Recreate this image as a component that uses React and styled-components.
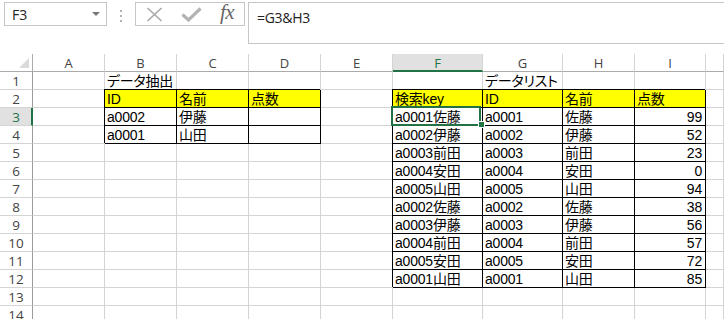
import React from "react";
import styled, { createGlobalStyle } from "styled-components";

const GlobalStyle = createGlobalStyle`
  html, body { margin: 0; padding: 0; background: #fff; }
  body { font-family: "Liberation Sans", "Noto Sans CJK JP", sans-serif; overflow: hidden; }
`;

const Page = styled.div`
  width: 724px;
  height: 319px;
  overflow: hidden;
  background: #fff;
`;

const FormulaBar = styled.div`
  display: flex;
  align-items: flex-start;
  height: 42px;
  padding-top: 2px;
  margin-bottom: 10px;
`;

const NameBox = styled.div`
  box-sizing: border-box;
  width: 103px;
  height: 24px;
  margin-left: 4px;
  border: 1px solid #c6c6c6;
  display: flex;
  align-items: center;
  justify-content: space-between;
  padding: 0 6px 0 7px;
  font-family: "Open Sans", "Liberation Sans", sans-serif;
  font-size: 14px;
  color: #222;
`;

const Caret = styled.span`
  width: 0;
  height: 0;
  border-left: 4px solid transparent;
  border-right: 4px solid transparent;
  border-top: 4px solid #777;
`;

const Dots = styled.div`
  display: flex;
  flex-direction: column;
  gap: 3px;
  margin: 8px 13px 0 13px;
  & > span {
    width: 2px;
    height: 2px;
    background: #b0b0b0;
  }
`;

const FxButtons = styled.div`
  box-sizing: border-box;
  width: 110px;
  height: 24px;
  border: 1px solid #c6c6c6;
  display: flex;
  align-items: center;
  padding-left: 10px;
  gap: 18px;
`;

const FxText = styled.span`
  font-family: "Liberation Serif", "DejaVu Serif", serif;
  font-style: italic;
  font-size: 21px;
  color: #666;
  line-height: 1;
  margin-top: -3px;
  letter-spacing: -0.5px;
`;

const FormulaInput = styled.div`
  box-sizing: border-box;
  flex: 1;
  height: 42px;
  margin-left: 3px;
  border: 1px solid #c6c6c6;
  border-right: none;
  padding: 5px 0 0 8px;
  font-family: "Open Sans", "Liberation Sans", sans-serif;
  font-size: 14px;
  color: #222;
  letter-spacing: -0.3px;
`;

const Sheet = styled.div`
  display: grid;
  grid-template-columns: 33px 72px 72px 72px 72px 72px 90px 80px 72px 71px 1fr;
  grid-auto-rows: 18px;
`;

const Corner = styled.div`
  box-sizing: border-box;
  border-right: 1px solid #ababab;
  border-bottom: 1px solid #ababab;
  display: flex;
  align-items: flex-end;
  justify-content: flex-end;
  padding: 0 3px 3px 0;
`;

const ColHeader = styled.div`
  box-sizing: border-box;
  border-right: 1px solid #d4d4d4;
  border-bottom: ${(p) => (p.$active ? "2px solid #217346" : "1px solid #ababab")};
  background: ${(p) => (p.$active ? "#e1e1e1" : "#fff")};
  color: ${(p) => (p.$active ? "#217346" : "#444")};
  font-family: "Open Sans", "Liberation Sans", sans-serif;
  font-size: 13px;
  display: flex;
  align-items: center;
  justify-content: center;
  padding-top: 1px;
`;

const RowHeader = styled.div`
  box-sizing: border-box;
  border-bottom: 1px solid #d4d4d4;
  border-right: ${(p) => (p.$active ? "2px solid #217346" : "1px solid #9b9b9b")};
  background: ${(p) => (p.$active ? "#e1e1e1" : "#fff")};
  color: ${(p) => (p.$active ? "#217346" : "#444")};
  font-family: "Open Sans", "Liberation Sans", sans-serif;
  font-size: 13.5px;
  display: flex;
  align-items: center;
  justify-content: center;
  padding-left: ${(p) => (p.$active ? "1px" : "0")};
`;

const Cell = styled.div`
  box-sizing: border-box;
  position: ${(p) => (p.$selected ? "relative" : "static")};
  border-right: 1px solid ${(p) => (p.$boxed ? "#000" : "#d4d4d4")};
  border-bottom: 1px solid ${(p) => (p.$boxed ? "#000" : "#d4d4d4")};
  box-shadow: ${(p) => (p.$boxed ? "-1px -1px 0 #000" : "none")};
  background: ${(p) => (p.$fill ? "#ffff00" : "transparent")};
  display: flex;
  align-items: flex-end;
  justify-content: ${(p) => (p.$right ? "flex-end" : "flex-start")};
  padding: 0 ${(p) => (p.$right ? "3px" : "0")} 0 2px;
  font-size: 14px;
  line-height: 16px;
  letter-spacing: -0.2px;
  color: #000;
  white-space: nowrap;
  overflow: visible;
  font-feature-settings: ${(p) => (p.$title ? '"palt"' : "normal")};
`;

const Selection = styled.div`
  position: absolute;
  left: -2px;
  top: -2px;
  right: 1px;
  bottom: -1px;
  border: 2px solid #217346;
  pointer-events: none;
  z-index: 2;
`;

const Handle = styled.div`
  position: absolute;
  left: 85px;
  top: 13px;
  width: 5px;
  height: 5px;
  background: #217346;
  border: 1px solid #fff;
  z-index: 3;
`;

const COLS = ["A", "B", "C", "D", "E", "F", "G", "H", "I", ""];

const list = [
  ["a0001", "佐藤", 99],
  ["a0002", "伊藤", 52],
  ["a0003", "前田", 23],
  ["a0004", "安田", 0],
  ["a0005", "山田", 94],
  ["a0002", "佐藤", 38],
  ["a0003", "伊藤", 56],
  ["a0004", "前田", 57],
  ["a0005", "安田", 72],
  ["a0001", "山田", 85],
];

const extract = [
  ["a0002", "伊藤"],
  ["a0001", "山田"],
];

function buildRow(r) {
  const cells = Array.from({ length: 10 }, () => ({ text: "" }));
  if (r === 1) {
    cells[1] = { text: "データ抽出", title: true };
    cells[6] = { text: "データリスト", title: true };
  } else if (r === 2) {
    cells[1] = { text: "ID", boxed: true, fill: true };
    cells[2] = { text: "名前", boxed: true, fill: true };
    cells[3] = { text: "点数", boxed: true, fill: true };
    cells[5] = { text: "検索key", boxed: true, fill: true };
    cells[6] = { text: "ID", boxed: true, fill: true };
    cells[7] = { text: "名前", boxed: true, fill: true };
    cells[8] = { text: "点数", boxed: true, fill: true };
  } else if (r >= 3 && r <= 12) {
    const e = extract[r - 3];
    if (e) {
      cells[1] = { text: e[0], boxed: true };
      cells[2] = { text: e[1], boxed: true };
      cells[3] = { text: "", boxed: true };
    }
    const d = list[r - 3];
    cells[5] = { text: d[0] + d[1], boxed: true, selected: r === 3 };
    cells[6] = { text: d[0], boxed: true };
    cells[7] = { text: d[1], boxed: true };
    cells[8] = { text: String(d[2]), boxed: true, right: true };
  }
  return cells;
}

const ROWS = Array.from({ length: 14 }, (_, i) => i + 1);

function CornerMark() {
  return (
    <svg width="10" height="10" viewBox="0 0 10 10">
      <polygon points="10,0 10,10 0,10" fill="#dadada" />
    </svg>
  );
}

function CancelIcon() {
  return (
    <svg width="17" height="15" viewBox="0 0 17 15">
      <path d="M1.5 1 L15.5 14 M15.5 1 L1.5 14" stroke="#a8a8a8" strokeWidth="1.6" fill="none" />
    </svg>
  );
}

function EnterIcon() {
  return (
    <svg width="21" height="15" viewBox="0 0 21 15">
      <path d="M1.5 7.5 L7.5 13 L19.5 1.5" stroke="#b4b4b4" strokeWidth="3.2" fill="none" strokeLinejoin="miter" />
    </svg>
  );
}

export default function App() {
  return (
    <Page>
      <GlobalStyle />
      <FormulaBar>
        <NameBox>
          <span>F3</span>
          <Caret />
        </NameBox>
        <Dots>
          <span />
          <span />
          <span />
        </Dots>
        <FxButtons>
          <CancelIcon />
          <EnterIcon />
          <FxText>fx</FxText>
        </FxButtons>
        <FormulaInput>=G3&amp;H3</FormulaInput>
      </FormulaBar>
      <Sheet>
        <Corner>
          <CornerMark />
        </Corner>
        {COLS.map((c, i) => (
          <ColHeader key={"h" + i} $active={c === "F"}>
            {c}
          </ColHeader>
        ))}
        {ROWS.map((r) => (
          <React.Fragment key={r}>
            <RowHeader $active={r === 3}>{r}</RowHeader>
            {buildRow(r).map((cell, ci) => (
              <Cell
                key={ci}
                $boxed={cell.boxed}
                $fill={cell.fill}
                $right={cell.right}
                $selected={cell.selected}
                $title={cell.title}
              >
                {cell.text}
                {cell.selected && (
                  <>
                    <Selection />
                    <Handle />
                  </>
                )}
              </Cell>
            ))}
          </React.Fragment>
        ))}
      </Sheet>
    </Page>
  );
}
